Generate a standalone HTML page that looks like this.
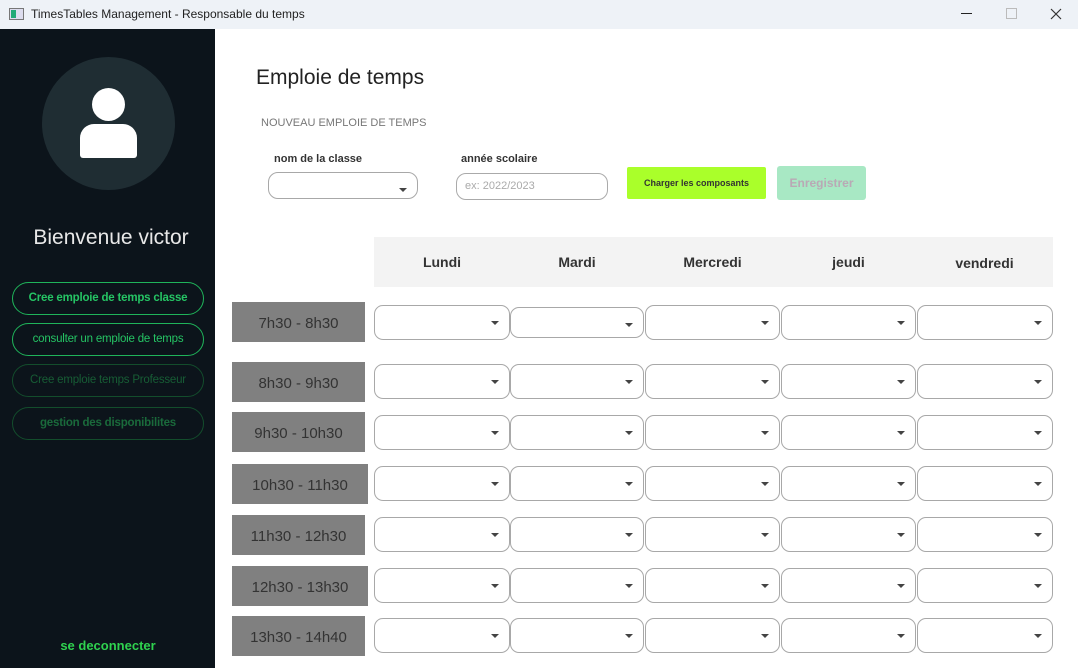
<!DOCTYPE html>
<html><head><meta charset="utf-8"><style>
*{margin:0;padding:0;box-sizing:border-box}
body{width:1078px;height:668px;position:relative;overflow:hidden;background:#fff;font-family:"Liberation Sans",sans-serif}
.a{position:absolute}
.tb{left:0;top:0;width:1078px;height:29px;background:#eef2f7;font-size:12px;color:#222}
.sb{left:0;top:29px;width:215px;height:639px;background:#0c141b}
.nb{position:absolute;left:12px;width:192px;height:33px;border:1.5px solid #1fb45a;border-radius:17px;color:#25c464;font-size:11.5px;text-align:center;line-height:30px;letter-spacing:-0.2px}
.tl{position:absolute;background:#808080;color:#333;font-size:15px;text-align:center;line-height:44px;height:40px}
.dd{position:absolute;height:35px;border:1.5px solid #a8a8a8;border-radius:9px;background:#fff}
.dd:after{content:"";position:absolute;right:10px;top:15px;border-left:4px solid transparent;border-right:4px solid transparent;border-top:4px solid #444}
.hd{position:absolute;top:237px;height:50px;background:#f3f3f3;font-weight:bold;font-size:14px;color:#333;text-align:center;line-height:50px}
</style></head><body>
<div class="a tb">
<div class="a" style="left:9px;top:8px;width:15px;height:12px;border:1px solid #777;background:#dde"><div style="width:5px;height:8px;margin:1px;background:#2a7"></div></div>
<div class="a" style="left:31px;top:7px">TimesTables Management - Responsable du temps</div>
<div class="a" style="left:961px;top:13px;width:11px;height:1px;background:#222"></div>
<div class="a" style="left:1006px;top:8px;width:11px;height:11px;border:1px solid #bbb"></div>
<svg class="a" style="left:1050px;top:8px" width="12" height="12"><path d="M1 1L11 11M11 1L1 11" stroke="#333" stroke-width="1.2"/></svg>
</div>
<div class="a sb">
<div class="a" style="left:42px;top:28px;width:133px;height:133px;border-radius:50%;background:#1f2d33"></div>
<div class="a" style="left:92px;top:59px;width:33px;height:33px;border-radius:50%;background:#fff"></div>
<div class="a" style="left:80px;top:95px;width:57px;height:34px;border-radius:14px 14px 3px 3px;background:#fff"></div>
<div class="a" style="left:0;top:197px;width:222px;text-align:center;color:#e8e8e8;font-size:21px">Bienvenue victor</div>
<div class="nb" style="top:253px;font-weight:bold">Cree emploie de temps classe</div>
<div class="nb" style="top:294px">consulter un emploie de temps</div>
<div class="nb" style="top:335px;border-color:#134d2c;color:#175d35">Cree emploie temps Professeur</div>
<div class="nb" style="top:378px;border-color:#134d2c;color:#1a6a3b;font-weight:bold">gestion des disponibilites</div>
<div class="a" style="left:0;top:609px;width:216px;text-align:center;color:#2fd24f;font-weight:bold;font-size:13px">se deconnecter</div>
</div>
<div class="a" style="left:256px;top:66px;font-size:21px;color:#222">Emploie de temps</div>
<div class="a" style="left:261px;top:117px;font-size:11px;color:#777">NOUVEAU EMPLOIE DE TEMPS</div>
<div class="a" style="left:274px;top:153px;font-size:11px;font-weight:bold;color:#333">nom de la classe</div>
<div class="dd" style="left:268px;top:172px;width:150px;height:27px;border-radius:10px"></div>
<div class="a" style="left:461px;top:153px;font-size:11px;font-weight:bold;color:#333">année scolaire</div>
<div class="a" style="left:456px;top:173px;width:152px;height:27px;border:1.5px solid #aaa;border-radius:10px;font-size:11px;color:#aaa;padding:6px 8px">ex: 2022/2023</div>
<div class="a" style="left:627px;top:167px;width:139px;height:32px;background:#aaff2a;border-radius:2px;font-size:9px;font-weight:bold;color:#333;text-align:center;line-height:32px">Charger les composants</div>
<div class="a" style="left:777px;top:166px;width:89px;height:34px;background:#a8e8c4;border-radius:3px;font-size:12px;font-weight:bold;color:#b9a9b5;text-align:center;line-height:34px">Enregistrer</div>
<div class="hd" style="left:374px;width:136px">Lundi</div>
<div class="hd" style="left:509px;width:136px">Mardi</div>
<div class="hd" style="left:644px;width:137px">Mercredi</div>
<div class="hd" style="left:780px;width:137px">jeudi</div>
<div class="hd" style="left:916px;width:137px;line-height:53px">vendredi</div>
<div class="tl" style="left:232px;top:302px;width:133px">7h30 - 8h30</div>
<div class="tl" style="left:232px;top:362px;width:133px">8h30 - 9h30</div>
<div class="tl" style="left:232px;top:412px;width:133px">9h30 - 10h30</div>
<div class="tl" style="left:232px;top:464px;width:136px">10h30 - 11h30</div>
<div class="tl" style="left:232px;top:515px;width:133px">11h30 - 12h30</div>
<div class="tl" style="left:232px;top:566px;width:136px">12h30 - 13h30</div>
<div class="tl" style="left:232px;top:616px;width:133px">13h30 - 14h40</div>
<div id="g"></div>
<script>
var ys=[305,364,415,466,517,568,618],xs=[[374,136],[510,134],[645,135],[781,135],[917,136]],h='';
ys.forEach(function(y,i){xs.forEach(function(c,j){var yy=(i==0&&j==1)?y+2:y;var hh=(i==0&&j==1)?31:35;h+='<div class="dd" style="left:'+c[0]+'px;top:'+yy+'px;width:'+c[1]+'px;height:'+hh+'px"></div>';});});
document.getElementById('g').innerHTML=h;
</script>
</body></html>
